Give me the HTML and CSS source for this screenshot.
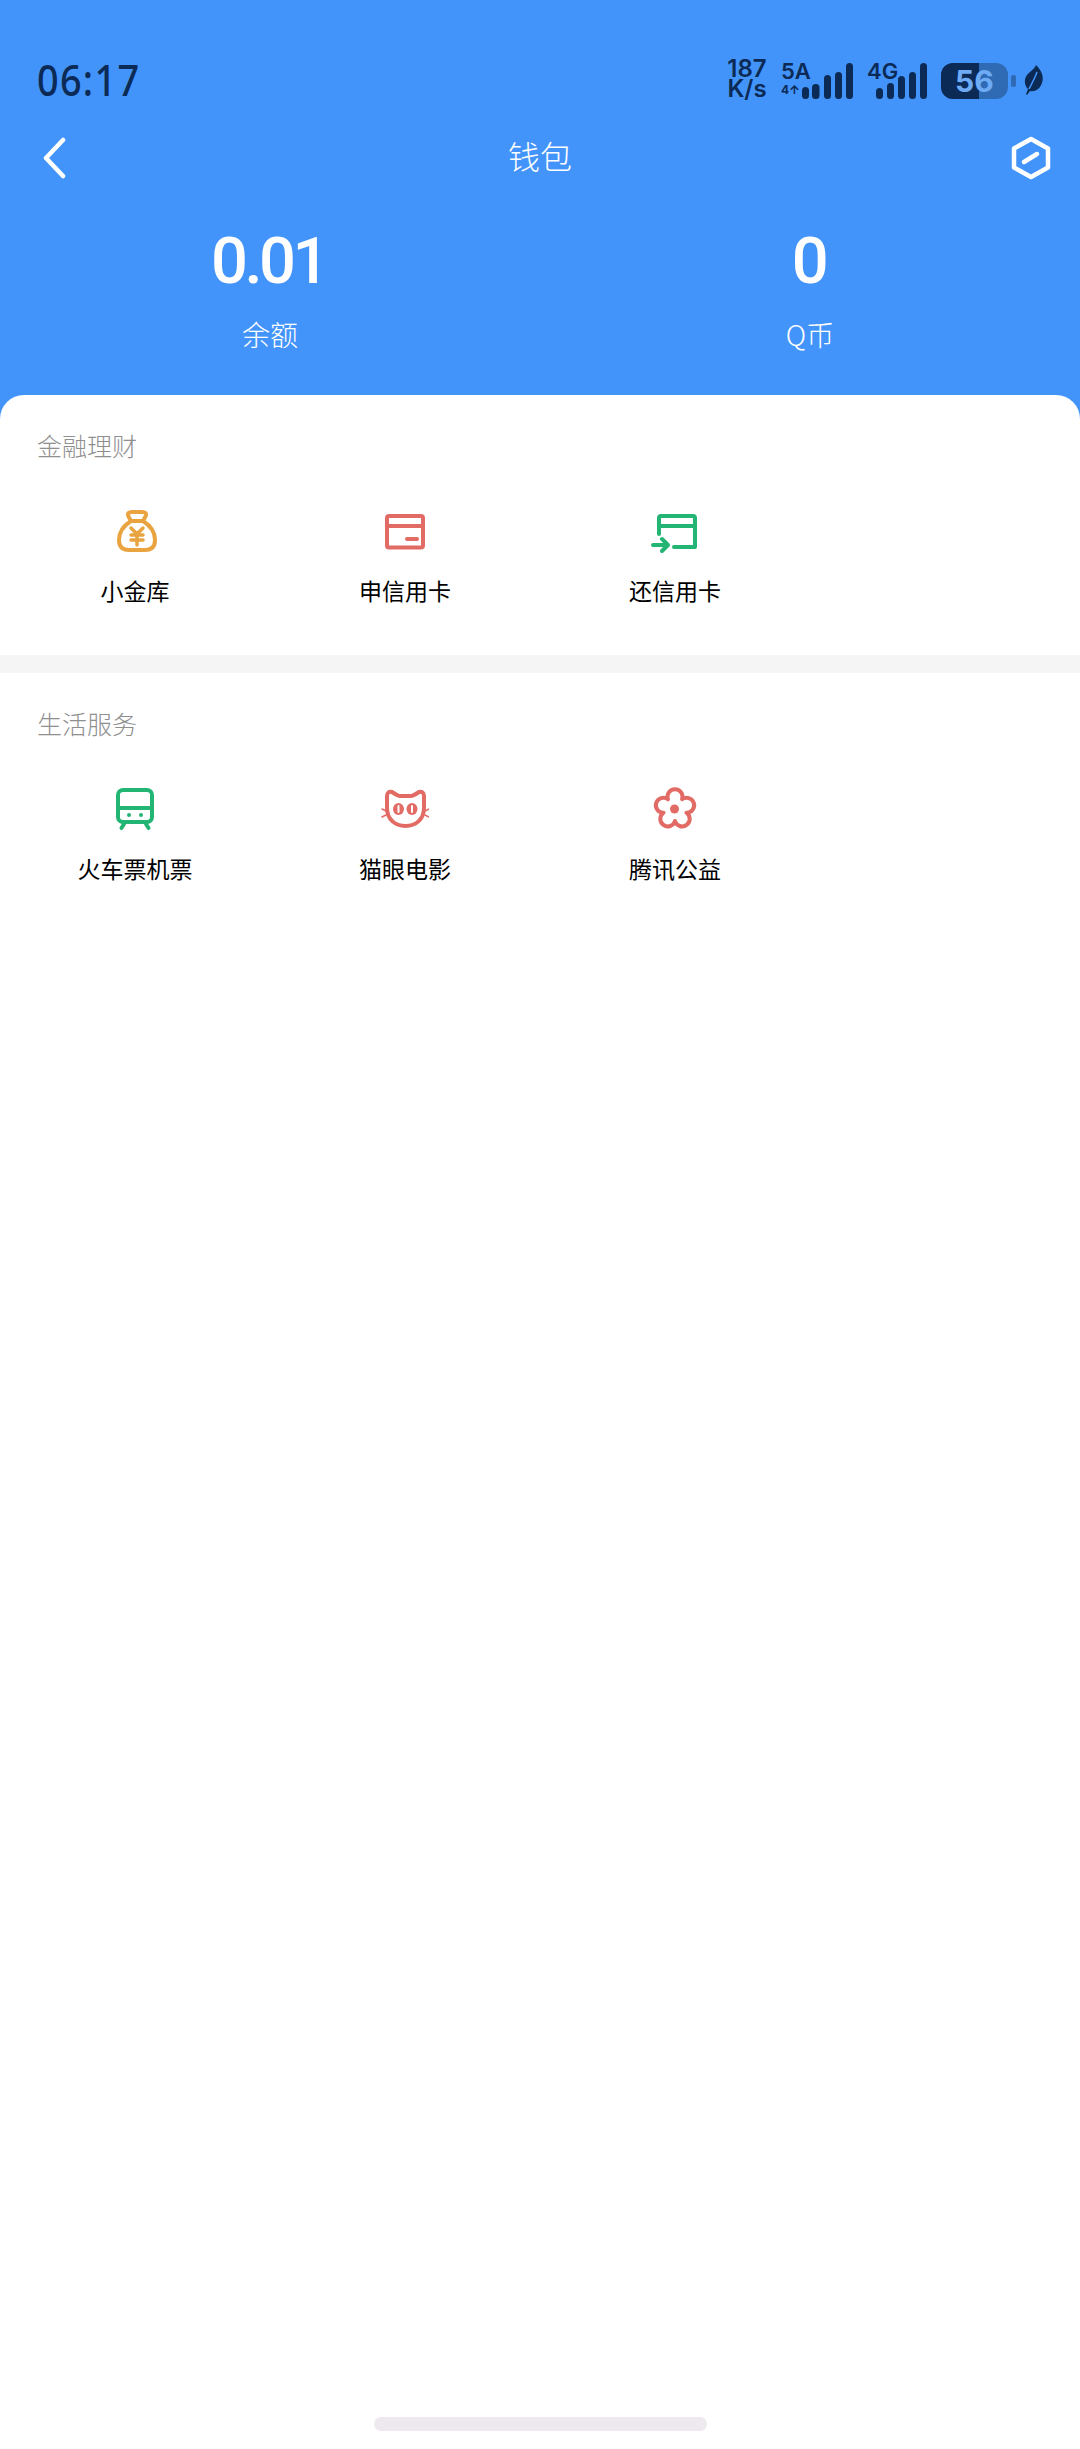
FILE: index.html
```html
<!DOCTYPE html>
<html lang="zh-CN">
<head>
    <meta charset="UTF-8">
    <meta name="viewport" content="width=device-width, initial-scale=1.0">
    <title>钱包</title>
    <link rel="stylesheet" href="styles.css">
</head>
<body>
    <div class="page">
        <header class="header">
            <div class="status">
                <div class="time">06:17</div>
                <div class="status-right">
                    <div class="speed"><div class="speed-num">187</div><div class="speed-unit">K/s</div></div>
                    <div class="net net-5a">
                        <div class="net-text"><span class="net-name">5A</span><span class="net-sub">4↑</span></div>
                        <svg class="signal" width="51" height="36" viewBox="0 0 51 36">
                            <rect x="0" y="24" width="7" height="12" rx="3.5"/>
                            <rect x="10" y="21" width="7.5" height="15" rx="3.5"/>
                            <rect x="22" y="12" width="7" height="24" rx="3.5"/>
                            <rect x="33" y="9" width="7" height="27" rx="3.5"/>
                            <rect x="44" y="0" width="7" height="36" rx="3.5"/>
                        </svg>
                    </div>
                    <div class="net net-4g">
                        <div class="net-text"><span class="net-name">4G</span></div>
                        <svg class="signal" width="51" height="36" viewBox="0 0 51 36">
                            <rect x="0" y="25" width="7" height="11" rx="3.5"/>
                            <rect x="11" y="20" width="7" height="16" rx="3.5"/>
                            <rect x="22" y="13" width="7" height="23" rx="3.5"/>
                            <rect x="33" y="9" width="7" height="27" rx="3.5"/>
                            <rect x="44" y="0" width="7" height="36" rx="3.5"/>
                        </svg>
                    </div>
                    <div class="battery">
                        <div class="battery-body"><div class="battery-fill"></div><span class="battery-num">56</span></div>
                        <div class="battery-nub"></div>
                    </div>
                    <svg class="leaf" width="20" height="30" viewBox="0 0 20 30">
                        <path d="M12 0 C18 6 20 12 18 18 C16 24 11 27 6 26 L3 30 L2 29 L4 24 C0 20 0 14 3 10 C5 7 10 5 12 0 Z"/>
                        <path class="leaf-vein" d="M5 24 C8 18 11 13 13 7"/>
                    </svg>
                </div>
            </div>

            <nav class="nav">
                <svg class="nav-back" width="24" height="46" viewBox="0 0 24 46">
                    <polyline points="21,5 4,23 21,41"/>
                </svg>
                <div class="nav-title">钱包</div>
                <svg class="nav-hex" width="42" height="46" viewBox="0 0 42 46">
                    <path d="M21 4 L38 13.5 V32.5 L21 42 L4 32.5 V13.5 Z"/>
                    <line x1="14" y1="27" x2="27" y2="19"/>
                </svg>
            </nav>

            <div class="stats">
                <div class="stat">
                    <div class="stat-num">0.01</div>
                    <div class="stat-label">余额</div>
                </div>
                <div class="stat">
                    <div class="stat-num">0</div>
                    <div class="stat-label">Q币</div>
                </div>
            </div>
        </header>

        <main class="main">
            <section class="section">
                <h2 class="section-title">金融理财</h2>
                <div class="items">
                    <div class="item">
                        <svg class="icon icon-orange" width="48" height="48" viewBox="0 0 48 48">
                            <path d="M20 14 C12 19 8 26 8 33 C8 40 12 43 18 43 H34 C40 43 44 40 44 33 C44 26 40 19 32 14 Z"/>
                            <path d="M20 14 L17.5 9.5 C16 6 18 5 21 5 H31 C34 5 36 6 34.5 9.5 L32 14"/>
                            <path class="thin" d="M20 21 L26 27 L32 21 M20 28 H32 M20 33 H32 M26 27 V38"/>
                        </svg>
                        <div class="item-label">小金库</div>
                    </div>
                    <div class="item">
                        <svg class="icon icon-red" width="48" height="48" viewBox="0 0 48 48">
                            <rect x="6" y="9" width="36" height="31.5" rx="2"/>
                            <line x1="6" y1="19" x2="42" y2="19"/>
                            <line x1="26" y1="32" x2="36" y2="32"/>
                        </svg>
                        <div class="item-label">申信用卡</div>
                    </div>
                    <div class="item">
                        <svg class="icon icon-green" width="48" height="48" viewBox="0 0 48 48">
                            <path d="M8 27 V11 Q8 9 10 9 H42 Q44 9 44 11 V40 H23"/>
                            <line x1="8" y1="19" x2="44" y2="19"/>
                            <path d="M2 38 H17 M11 32 L17 38 L11 44"/>
                        </svg>
                        <div class="item-label">还信用卡</div>
                    </div>
                </div>
            </section>

            <div class="divider"></div>

            <section class="section">
                <h2 class="section-title">生活服务</h2>
                <div class="items">
                    <div class="item">
                        <svg class="icon icon-green" width="48" height="48" viewBox="0 0 48 48">
                            <rect x="7" y="5" width="34" height="32" rx="5"/>
                            <line x1="7" y1="23" x2="41" y2="23"/>
                            <circle class="dot" cx="18" cy="30" r="2"/>
                            <circle class="dot" cx="30" cy="30" r="2"/>
                            <path d="M13 39 L10.5 43 M35 39 L37.5 43"/>
                        </svg>
                        <div class="item-label">火车票机票</div>
                    </div>
                    <div class="item">
                        <svg class="icon icon-red" width="48" height="48" viewBox="0 0 48 48">
                            <path d="M11 7 C14 9 17 11 19 11 H30 C32 11 35 9 38 7 C41 6 43 8 43 11 V23 C43 34 35 41 24.5 41 C14 41 6 34 6 23 V11 C6 8 8 6 11 7 Z"/>
                            <ellipse class="eye" cx="17.5" cy="24" rx="5.5" ry="6"/>
                            <ellipse class="eye" cx="31" cy="24" rx="5.5" ry="6"/>
                            <path class="slit" d="M17.5 21 V27 M31 21 V27"/>
                            <path class="hair" d="M5 26 L1 24 M5 30 L1 32 M44 26 L48 24 M44 30 L48 32"/>
                        </svg>
                        <div class="item-label">猫眼电影</div>
                    </div>
                    <div class="item">
                        <svg class="icon icon-red" width="48" height="48" viewBox="0 0 48 48">
                            <path d="M16.95 14.29 A7.5 7.5 0 1 1 31.05 14.29 A7.5 7.5 0 1 1 35.41 27.71 A7.5 7.5 0 1 1 24 36 A7.5 7.5 0 1 1 12.59 27.71 A7.5 7.5 0 1 1 16.95 14.29 Z"/>
                            <circle class="dot" cx="23.5" cy="24" r="4.5"/>
                        </svg>
                        <div class="item-label">腾讯公益</div>
                    </div>
                </div>
            </section>

            <div class="home-bar"></div>
        </main>
    </div>
</body>
</html>
```

FILE: styles.css
```css
* {
    box-sizing: border-box;
}

body {
    margin: 0;
    font-family: "Noto Sans CJK SC", "Noto Sans", sans-serif;
    background-color: #fff;
}

.page {
    width: 1080px;
    height: 2449px;
    background-color: #4394fa;
    display: flex;
    flex-direction: column;
    overflow: hidden;
}

.header {
    height: 395px;
    flex-shrink: 0;
    color: #fff;
}

/* status bar */
.status {
    height: 99px;
    padding: 59px 36px 0 37px;
    display: flex;
    justify-content: space-between;
    color: #0b2a55;
}

.time {
    font-family: "Noto Sans", sans-serif;
    font-size: 44px;
    font-weight: 500;
    line-height: 40px;
    letter-spacing: 1.5px;
    transform: scaleX(0.86);
    transform-origin: left center;
}

.status-right {
    display: flex;
    align-items: flex-start;
}

.speed {
    width: 40px;
    margin-right: 14px;
    font-family: "Inter", sans-serif;
    font-weight: 600;
    text-align: center;
    white-space: nowrap;
}

.speed-num {
    font-size: 24px;
    line-height: 20px;
}

.speed-unit {
    font-size: 24px;
    line-height: 20px;
}

.net {
    position: relative;
    height: 40px;
}

.net-5a {
    width: 72px;
    margin-right: 14px;
}

.net-4g {
    width: 60px;
    margin-right: 14px;
}

.net-text {
    display: flex;
    flex-direction: column;
    font-family: "Inter", sans-serif;
    font-weight: 600;
}

.net-name {
    font-size: 22px;
    line-height: 24px;
}

.net-sub {
    font-size: 12px;
    line-height: 14px;
    font-weight: 700;
}

.signal {
    position: absolute;
    right: 0;
    top: 4px;
    fill: #0b2a55;
}

.battery {
    display: flex;
    align-items: center;
    margin-top: 4px;
    margin-right: 8px;
}

.battery-body {
    position: relative;
    width: 67px;
    height: 36px;
    border-radius: 12px;
    background-color: #2f6bb5;
    overflow: hidden;
}

.battery-fill {
    width: 38px;
    height: 100%;
    background-color: #0b2a55;
}

.battery-num {
    position: absolute;
    left: 14px;
    top: 0;
    font-family: "Inter", sans-serif;
    font-size: 30px;
    font-weight: 700;
    line-height: 36px;
    color: #6fabf5;
}

.battery-nub {
    width: 5px;
    height: 12px;
    margin-left: 3px;
    border-radius: 2px;
    background-color: #2f6bb5;
}

.leaf {
    margin-top: 6px;
    fill: #0b2a55;
}

.leaf-vein {
    fill: none;
    stroke: #4394fa;
    stroke-width: 1.5;
}

/* nav */
.nav {
    height: 46px;
    margin-top: 36px;
    padding: 0 28px 0 42px;
    display: flex;
    justify-content: space-between;
    align-items: center;
    position: relative;
}

.nav-title {
    position: absolute;
    left: 0;
    right: 0;
    top: -3px;
    text-align: center;
    font-size: 32px;
    font-weight: 300;
    line-height: 46px;
}

.nav-back polyline,
.nav-hex path,
.nav-hex line {
    fill: none;
    stroke: #fff;
    stroke-width: 4.5;
    stroke-linecap: round;
    stroke-linejoin: round;
}

/* balance */
.stats {
    margin-top: 42px;
    display: grid;
    grid-template-columns: 1fr 1fr;
}

.stat {
    text-align: center;
}

.stat-num {
    padding-right: 3px;
    font-family: "Roboto", sans-serif;
    font-size: 65px;
    font-weight: 500;
    line-height: 76px;
    letter-spacing: -3.5px;
}

.stat-label {
    margin-top: 15px;
    font-size: 28px;
    font-weight: 300;
    line-height: 40px;
}

/* white sheet */
.main {
    flex: 1;
    background-color: #fff;
    border-radius: 24px 24px 0 0;
    display: flex;
    flex-direction: column;
}

.section {
    height: 260px;
    padding-top: 32px;
}

.section + .divider + .section {
    height: auto;
}

.section-title {
    margin: 0;
    padding-left: 37px;
    font-size: 25px;
    font-weight: 300;
    line-height: 36px;
    color: #8f8f8f;
}

.items {
    margin-top: 44px;
    display: grid;
    grid-template-columns: repeat(4, 270px);
}

.item {
    display: flex;
    flex-direction: column;
    align-items: center;
}

.item-label {
    margin-top: 18px;
    font-size: 23px;
    line-height: 34px;
    color: #000;
}

.icon {
    display: block;
    fill: none;
    stroke-width: 4;
    stroke-linecap: round;
    stroke-linejoin: round;
}

.icon-orange {
    stroke: #e9a440;
}

.icon-red {
    stroke: #e26b65;
}

.icon-green {
    stroke: #22b573;
}

.icon .thin {
    stroke-width: 3.5;
}

.icon .hair {
    stroke-width: 1.5;
}

.icon-red .dot,
.icon-red .eye {
    fill: #e26b65;
    stroke: none;
}

.icon-green .dot {
    fill: #22b573;
    stroke: none;
}

.icon .slit {
    stroke: #fff;
    stroke-width: 2;
}

.divider {
    height: 18px;
    flex-shrink: 0;
    background-color: #f5f5f5;
}

.home-bar {
    width: 333px;
    height: 14px;
    margin: auto auto 18px;
    border-radius: 7px;
    background-color: #eee8ef;
}
```
